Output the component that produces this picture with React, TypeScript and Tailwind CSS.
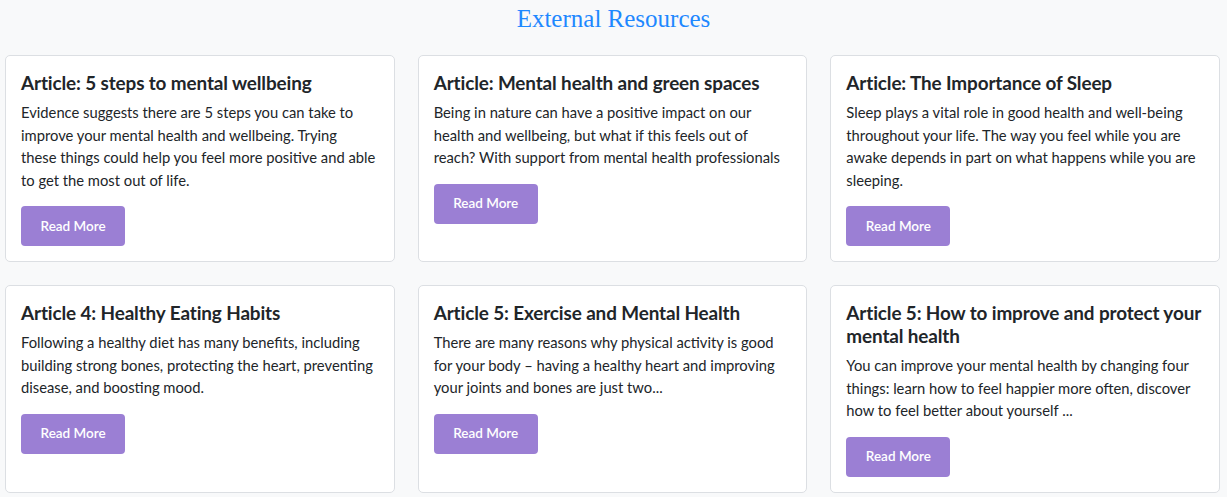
const articles = [
  {
    title: 'Article: 5 steps to mental wellbeing',
    text: 'Evidence suggests there are 5 steps you can take to improve your mental health and wellbeing. Trying these things could help you feel more positive and able to get the most out of life.',
  },
  {
    title: 'Article: Mental health and green spaces',
    text: 'Being in nature can have a positive impact on our health and wellbeing, but what if this feels out of reach? With support from mental health professionals',
  },
  {
    title: 'Article: The Importance of Sleep',
    text: 'Sleep plays a vital role in good health and well-being throughout your life. The way you feel while you are awake depends in part on what happens while you are sleeping.',
  },
  {
    title: 'Article 4: Healthy Eating Habits',
    text: 'Following a healthy diet has many benefits, including building strong bones, protecting the heart, preventing disease, and boosting mood.',
  },
  {
    title: 'Article 5: Exercise and Mental Health',
    text: 'There are many reasons why physical activity is good for your body – having a healthy heart and improving your joints and bones are just two...',
  },
  {
    title: 'Article 5: How to improve and protect your mental health',
    text: 'You can improve your mental health by changing four things: learn how to feel happier more often, discover how to feel better about yourself ...',
  },
];

export default function App() {
  return (
    <div className="min-h-[497px] bg-[#f8f9fa] px-[5px] font-['Lato',sans-serif] text-[#212529]">
      <h2 className="pt-[3px] pb-[20px] text-center font-['Liberation_Serif',serif] text-[25px] leading-[32px] text-[#1e88ff]">
        External Resources
      </h2>
      <div className="grid grid-cols-3 gap-x-[23px] gap-y-[23px] pr-[2px]">
        {articles.map((a) => (
          <div
            key={a.title}
            className="rounded-[5px] border border-[#dcdfe3] bg-white pl-[15px] pr-[18px] pt-[15px] pb-[15px]"
          >
            <h3 className="mr-[-10px] mb-[7px] text-[18.9px] font-bold leading-[23px] tracking-[-0.12px] text-[#212529]">
              {a.title}
            </h3>
            <p className="text-[14.75px] leading-[22.5px]">{a.text}</p>
            <button
              type="button"
              className="mt-[15px] h-[40px] rounded-[4px] bg-[#9b7fd4] px-[19.5px] text-[13.5px] font-semibold text-white"
            >
              Read More
            </button>
          </div>
        ))}
      </div>
    </div>
  );
}
